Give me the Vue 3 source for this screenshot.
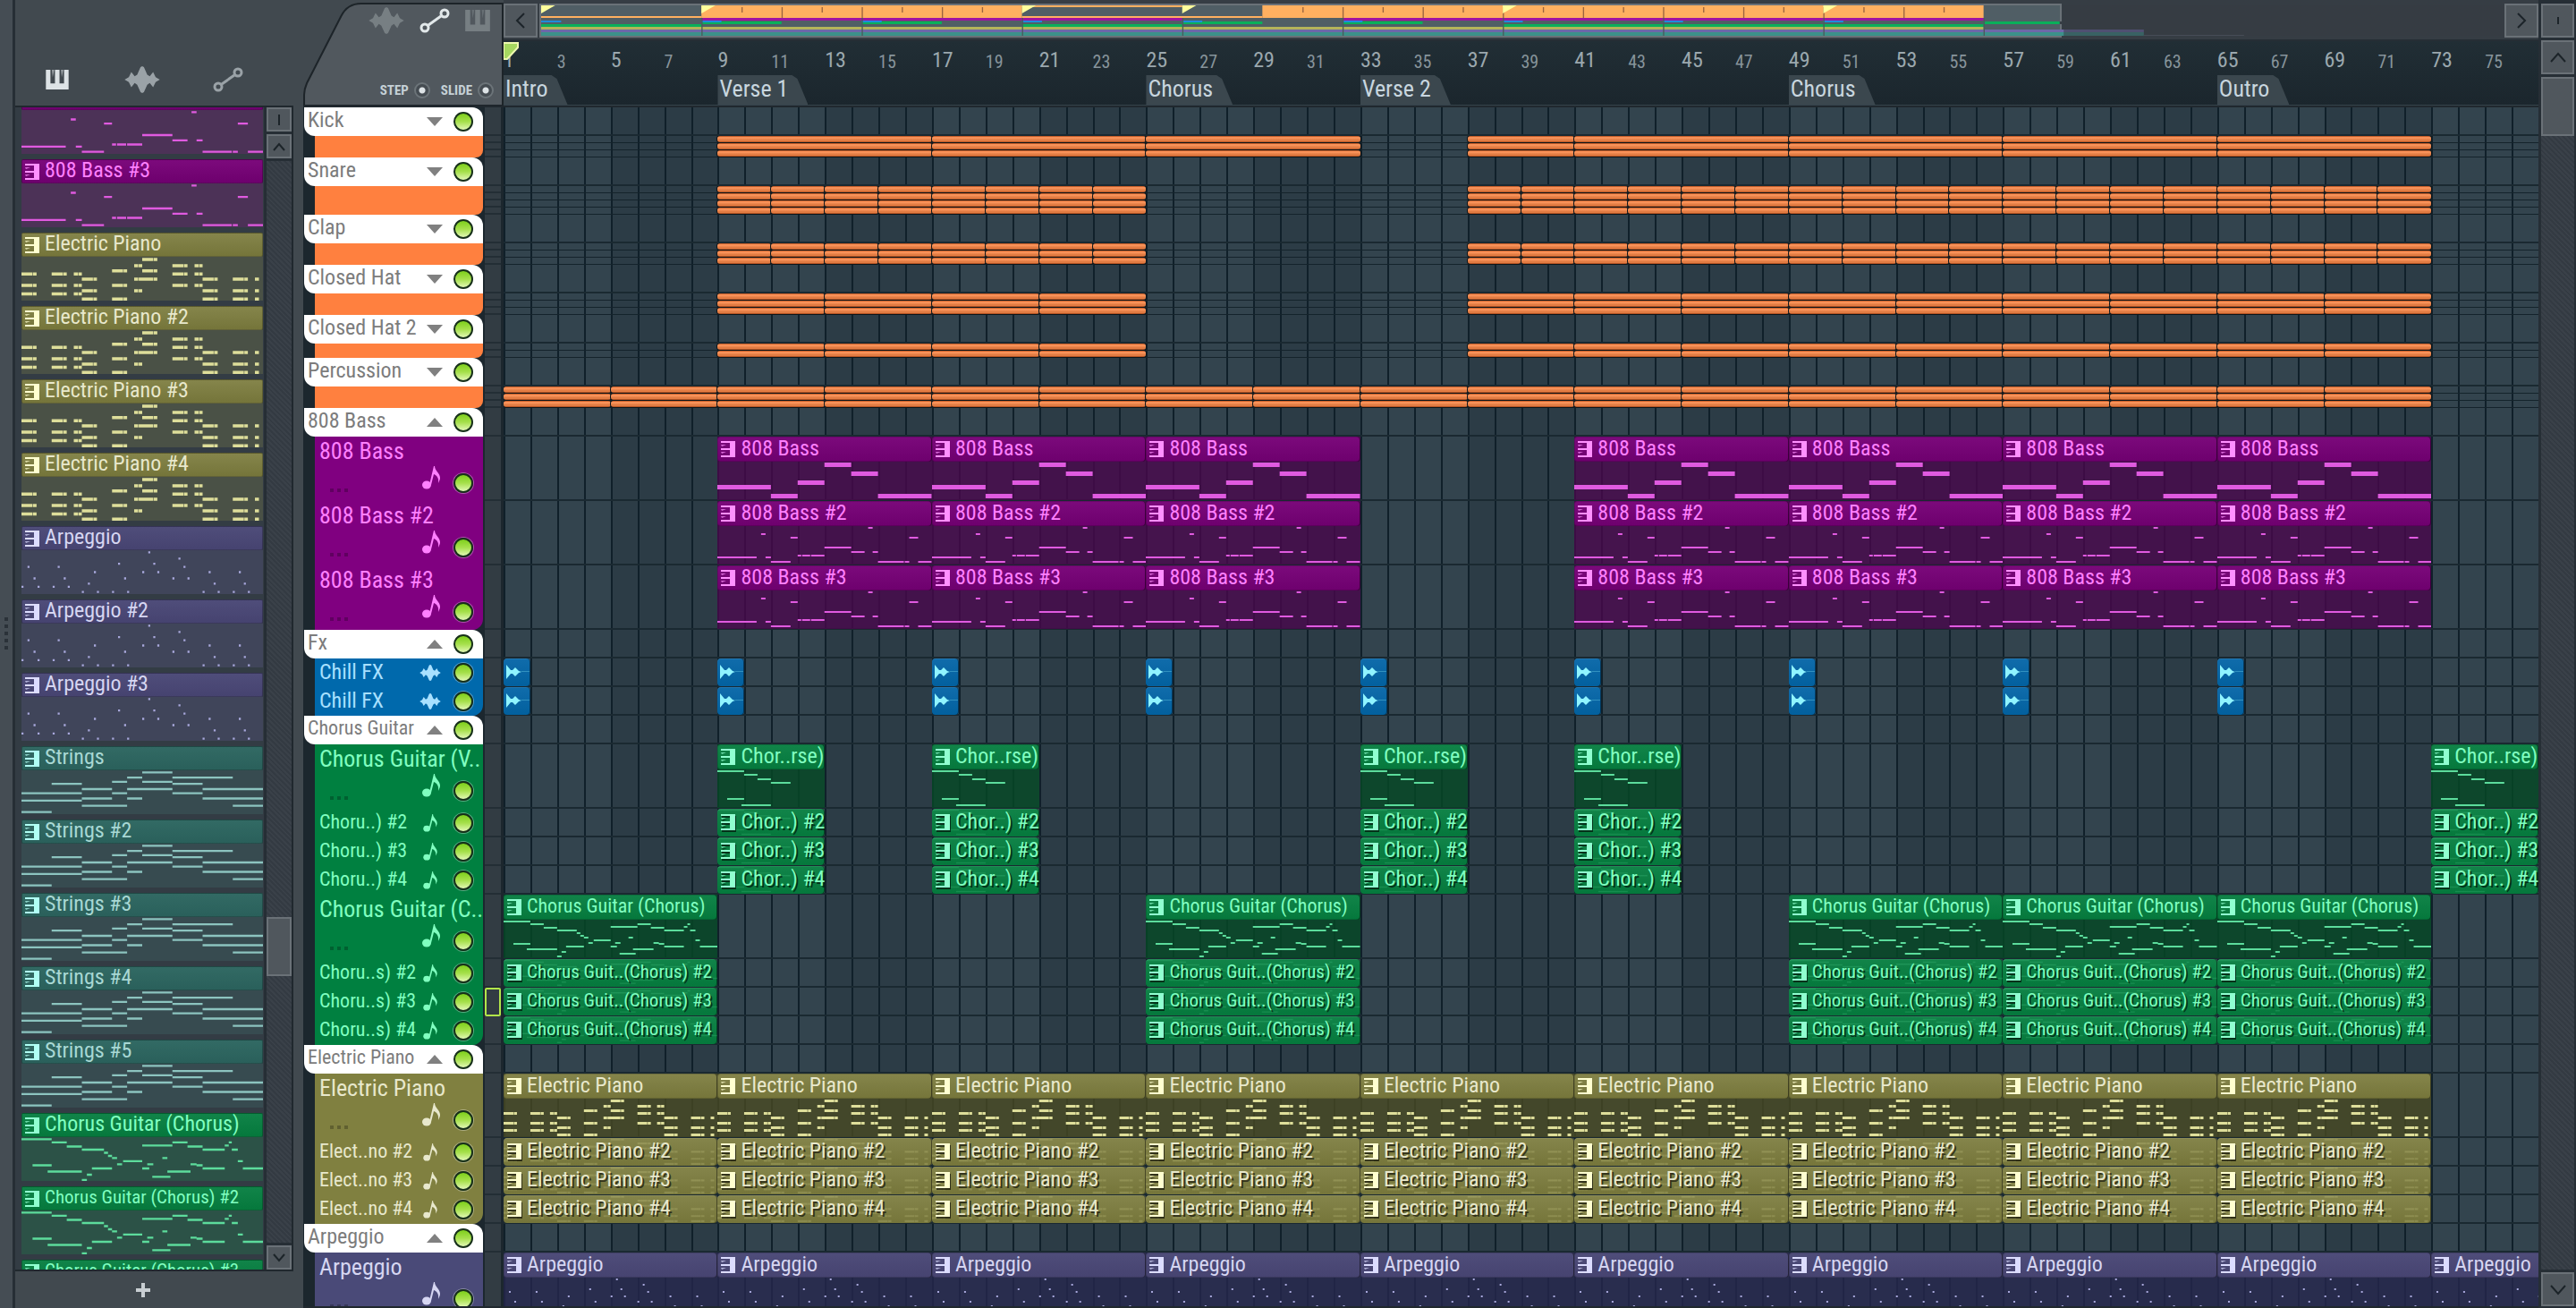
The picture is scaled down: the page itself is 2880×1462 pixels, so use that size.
<script setup>
import { ref, onMounted } from 'vue';

const BARS = 76;
const MAP_BARS = 98;

const step = ref(true);
const slide = ref(true);
const pickerList = ref(null);

// notes are [x, y, width] on a 240x42 canvas (8 bars)
const spread = (y, items) => items.map(([x, w]) => [x, y, w]);

const pianoNotes = [
  ...spread(1, [[120, 15]]),
  ...spread(7, [[112, 8], [150, 15], [172, 8]]),
  ...spread(12, [[90, 15], [120, 15]]),
  ...spread(15, [[0, 15], [30, 15], [52, 8], [150, 15], [172, 8]]),
  ...spread(20, [[60, 15], [112, 8], [120, 15], [180, 15], [210, 15], [232, 4]]),
  ...spread(26, [[0, 15], [30, 15], [52, 8], [90, 15], [150, 15], [172, 8]]),
  ...spread(31, [[60, 15], [112, 8], [180, 15], [210, 15], [232, 4]]),
  ...spread(34, [[0, 15], [30, 15], [52, 8]]),
  ...spread(39, [[60, 15], [90, 15], [180, 15], [210, 15], [232, 4]]),
].flatMap(([x, y, w]) => (w > 4 ? [[x, y, w - 4], [x + w - 3.5, y, 3.5]] : [[x, y, w]]));

const arpNotes = [
  ...spread(1, [[126, 2]]),
  ...spread(7, [[156, 2]]),
  ...spread(12, [[96, 2], [131, 2]]),
  ...spread(15, [[6, 2], [36, 2], [161, 2]]),
  ...spread(20, [[72, 2], [120, 2], [135, 2], [186, 2], [216, 2]]),
  ...spread(26, [[12, 2], [42, 2], [102, 2], [150, 2], [165, 2]]),
  ...spread(31, [[66, 2], [191, 2], [221, 2]]),
  ...spread(34, [[0, 2], [16, 2], [31, 2], [46, 2]]),
  ...spread(39, [[60, 2], [75, 2], [90, 2], [105, 2], [180, 2], [195, 2], [210, 2], [225, 2]]),
];

const stringNotes = [
  ...spread(1, [[120, 30]]),
  ...spread(6, [[105, 15], [150, 30], [180, 30]]),
  ...spread(10, [[90, 15], [120, 30]]),
  ...spread(12, [[30, 30], [150, 30]]),
  ...spread(17, [[60, 30], [105, 15], [120, 30], [180, 30], [210, 30]]),
  ...spread(21, [[0, 30], [30, 30], [90, 15], [150, 30]]),
  ...spread(26, [[60, 30], [105, 15], [180, 30], [210, 30]]),
  ...spread(28, [[0, 30], [30, 30]]),
  ...spread(33, [[60, 30], [90, 15], [210, 30]]),
  ...spread(39, [[0, 30]]),
];

const chorusNotes = [
  [0, 1, 30], [30, 4, 15], [45, 8, 15], [60, 11, 22], [82, 14, 4], [86, 17, 4], [90, 19, 5],
  [11, 26, 19], [26, 32, 34], [60, 40, 5], [65, 35, 5], [70, 29, 20], [95, 25, 5], [101, 22, 19],
  [120, 7, 30], [120, 29, 7], [125, 25, 6], [140, 19, 5], [130, 37, 18], [145, 32, 23],
  [150, 4, 15], [165, 8, 15], [168, 25, 6], [174, 26, 6], [180, 11, 22], [180, 29, 22],
  [202, 7, 4], [206, 4, 3], [209, 11, 6], [215, 22, 5], [220, 29, 20],
];

const toPath = (notes, h) => notes.map(([x, y, w]) => `M${x} ${y}h${w}v${h}h-${w}z`).join('');

const patterns = {
  bass: { w: 240, d: toPath([[0, 26, 60], [60, 36, 30], [90, 21, 30], [120, 1, 30], [150, 11, 30], [180, 36, 60]], 5) },
  bass2: {
    w: 240,
    d: toPath([
      [0, 34, 44], [49, 8, 5], [54, 34, 6], [60, 39, 22], [82, 12, 8], [90, 32, 4], [95, 32, 9], [105, 32, 15],
      [120, 23, 30], [150, 28, 15], [169, 1, 5], [174, 28, 6], [180, 39, 29], [210, 39, 5], [215, 12, 10], [225, 39, 15],
    ], 2),
  },
  piano: { w: 240, d: toPath(pianoNotes, 3) },
  arp: { w: 240, d: toPath(arpNotes, 2) },
  strings: { w: 240, d: toPath(stringNotes, 2) },
  chorus: { w: 240, d: toPath(chorusNotes, 2) },
  verse: { w: 120, d: toPath([[0, 1, 30], [30, 5, 15], [45, 10, 15], [60, 14, 22], [11, 32, 19], [27, 39, 33]], 2) },
};

const picker = [
  { name: '808 Bass #2', tone: 'purple', pattern: 'bass2' },
  { name: '808 Bass #3', tone: 'purple', pattern: 'bass2' },
  { name: 'Electric Piano', tone: 'olive', pattern: 'piano' },
  { name: 'Electric Piano #2', tone: 'olive', pattern: 'piano' },
  { name: 'Electric Piano #3', tone: 'olive', pattern: 'piano' },
  { name: 'Electric Piano #4', tone: 'olive', pattern: 'piano' },
  { name: 'Arpeggio', tone: 'indigo', pattern: 'arp' },
  { name: 'Arpeggio #2', tone: 'indigo', pattern: 'arp' },
  { name: 'Arpeggio #3', tone: 'indigo', pattern: 'arp' },
  { name: 'Strings', tone: 'teal', pattern: 'strings' },
  { name: 'Strings #2', tone: 'teal', pattern: 'strings' },
  { name: 'Strings #3', tone: 'teal', pattern: 'strings' },
  { name: 'Strings #4', tone: 'teal', pattern: 'strings' },
  { name: 'Strings #5', tone: 'teal', pattern: 'strings' },
  { name: 'Chorus Guitar (Chorus)', tone: 'green', pattern: 'chorus' },
  { name: 'Chorus Guitar (Chorus) #2', tone: 'green', pattern: 'chorus' },
  { name: 'Chorus Guitar (Chorus) #3', tone: 'green', pattern: 'chorus' },
];

const range = (from, to, size) => {
  const out = [];
  for (let bar = from; bar < to; bar += size) out.push([bar, size]);
  return out;
};
const at = (bars, size) => bars.map((bar) => [bar, size]);

const kickClips = [...range(9, 33, 8), [37, 4], ...range(41, 73, 8)];
const snareClips = [...range(9, 25, 2), ...range(37, 73, 2)];
const hatClips = [...range(9, 25, 4), ...range(37, 73, 4)];
const bassClips = [...range(9, 33, 8), ...range(41, 73, 8)];
const verseClips = at([9, 17, 33, 41, 73], 4);
const chorusClips = at([1, 25, 49, 57, 65], 8);
const allClips = range(1, 73, 8);

const drum = (name, rows, clips) => ({
  name,
  tone: 'orange',
  folded: true,
  tracks: Array.from({ length: rows }, () => ({ size: 'mini', clips })),
});

const groups = [
  drum('Kick', 3, kickClips),
  drum('Snare', 4, snareClips),
  drum('Clap', 3, snareClips),
  drum('Closed Hat', 3, hatClips),
  drum('Closed Hat 2', 2, hatClips),
  drum('Percussion', 3, range(1, 73, 4)),
  {
    name: '808 Bass',
    tone: 'purple',
    tracks: [
      { size: 'large', name: '808 Bass', clip: '808 Bass', pattern: 'bass', clips: bassClips },
      { size: 'large', name: '808 Bass #2', clip: '808 Bass #2', pattern: 'bass2', clips: bassClips },
      { size: 'large', name: '808 Bass #3', clip: '808 Bass #3', pattern: 'bass2', clips: bassClips },
    ],
  },
  {
    name: 'Fx',
    tone: 'blue',
    tracks: [
      { size: 'small', name: 'Chill FX', audio: true, clips: at([1, 9, 17, 25, 33, 41, 49, 57, 65], 1) },
      { size: 'small', name: 'Chill FX', audio: true, clips: at([1, 9, 17, 25, 33, 41, 49, 57, 65], 1) },
    ],
  },
  {
    name: 'Chorus Guitar',
    tone: 'green',
    tracks: [
      { size: 'large', name: 'Chorus Guitar (V..', clip: 'Chor..rse)', pattern: 'verse', clips: verseClips },
      { size: 'small', name: 'Choru..) #2', clip: 'Chor..) #2', pattern: 'verse', clips: verseClips },
      { size: 'small', name: 'Choru..) #3', clip: 'Chor..) #3', pattern: 'verse', clips: verseClips },
      { size: 'small', name: 'Choru..) #4', clip: 'Chor..) #4', pattern: 'verse', clips: verseClips },
      { size: 'large', name: 'Chorus Guitar (C..', clip: 'Chorus Guitar (Chorus)', pattern: 'chorus', clips: chorusClips },
      { size: 'small', name: 'Choru..s) #2', clip: 'Chorus Guit..(Chorus) #2', pattern: 'chorus', clips: chorusClips },
      { size: 'small', name: 'Choru..s) #3', clip: 'Chorus Guit..(Chorus) #3', pattern: 'chorus', clips: chorusClips, selected: true },
      { size: 'small', name: 'Choru..s) #4', clip: 'Chorus Guit..(Chorus) #4', pattern: 'chorus', clips: chorusClips },
    ],
  },
  {
    name: 'Electric Piano',
    tone: 'olive',
    tracks: [
      { size: 'large', name: 'Electric Piano', clip: 'Electric Piano', pattern: 'piano', clips: allClips },
      { size: 'small', name: 'Elect..no #2', clip: 'Electric Piano #2', pattern: 'piano', clips: allClips },
      { size: 'small', name: 'Elect..no #3', clip: 'Electric Piano #3', pattern: 'piano', clips: allClips },
      { size: 'small', name: 'Elect..no #4', clip: 'Electric Piano #4', pattern: 'piano', clips: allClips },
    ],
  },
  {
    name: 'Arpeggio',
    tone: 'indigo',
    tracks: [
      { size: 'large', name: 'Arpeggio', clip: 'Arpeggio', pattern: 'arp', clips: range(1, 81, 8) },
    ],
  },
];

const numbers = range(1, 77, 2).map(([bar]) => bar);

const markers = [
  { bar: 1, name: 'Intro' },
  { bar: 9, name: 'Verse 1' },
  { bar: 25, name: 'Chorus' },
  { bar: 33, name: 'Verse 2' },
  { bar: 49, name: 'Chorus' },
  { bar: 65, name: 'Outro' },
];

// overview blocks: [bar, bars, y, height, colour]
const overview = [
  [1, 8, 12, 2, '#ffb060'],
  [9, 16, 0, 14, '#ffb060'],
  [25, 8, 0, 2, '#ffb060'],
  [25, 12, 12, 2, '#ffb060'],
  [37, 36, 0, 14, '#ffb060'],
  [9, 24, 14, 3, '#a014a0'],
  [41, 32, 14, 3, '#a014a0'],
  ...[9, 17, 33, 41, 73].map((bar) => [bar, 4, 18, 3, '#0aaf5a']),
  [73, 9, 18, 3, '#0aaf5a'],
  ...[1, 25, 49, 57, 65].map((bar) => [bar, 8, 21, 3, '#0aaf5a']),
  ...[1, 9, 17, 25, 33, 41, 49, 57, 65].map((bar) => [bar, 1, 17, 2, '#1e8cdc']),
  [1, 72, 24, 3, '#b4b45a'],
  [1, 80, 27, 3, '#6e68a8'],
  [1, 80, 30, 4, '#3c918a'],
  [81, 5, 33, 1, '#5b6370'],
  [76.8, 21.2, 18, 3, '#363d44'],
].filter(([bar, bars]) => !(bar === 73 && bars === 9));
const ticks = [11, 13, 15, 17, 19, 21, 23, 39, 41, 43, 45, 47, 49, 51, 53, 55, 57, 59, 61, 63, 65, 67, 69, 71];

const place = (bar, size) => ({
  left: `${((bar - 1) / BARS) * 100}%`,
  width: size ? `${(size / BARS) * 100}%` : undefined,
});

onMounted(() => {
  pickerList.value.scrollTop = 24;
});
</script>

<template>
  <div class="daw">
    <svg class="defs" aria-hidden="true">
      <symbol id="keys" viewBox="0 0 30 26">
        <path d="M0 0h6v18h6V0h6v18h6V0h6v26H0z" />
        <path d="M8 0h3l-2 10zM20 0h3l-2 10z" opacity="0.6" />
      </symbol>
      <symbol id="wave" viewBox="0 0 42 32">
        <path d="M0 16l5-3l3-6l4 5l3-2l4-9l2-1l2 1l4 9l3 2l4-5l3 6l5 3l-5 3l-3 6l-4-5l-3 2l-4 9l-2 1l-2-1l-4-9l-3-2l-4 5l-3-6z" />
      </symbol>
      <symbol id="slope" viewBox="0 0 34 28">
        <g fill="none" stroke="currentColor" stroke-width="3">
          <circle cx="6" cy="22" r="4" />
          <circle cx="28" cy="6" r="4" />
          <path d="M10 19l14-10" />
        </g>
      </symbol>
      <symbol id="clip-keys" viewBox="0 0 16 18">
        <path d="M0 0h16v18H0v-2h10v-6H0V8h10V2H0z" />
        <path d="M0 4l6 0l-5 2zM0 12l6 0l-5 2z" opacity="0.7" />
      </symbol>
      <symbol id="clip-wave" viewBox="0 0 26 16">
        <path d="M0 0l5 6h2l3-3l4 4l3 1l-3 1l-4 4l-3-3h-2l-5 6z" />
        <path d="M17 7h9v1h-9z" opacity="0.3" />
      </symbol>
      <symbol id="note" viewBox="0 0 20 26">
        <ellipse cx="5" cy="21" rx="5" ry="4.5" />
        <path d="M8 21L13 0h1c0 5 6 8 6 13c0 2-1 4-2 6c1-6-2-9-5-10l-3 12z" />
      </symbol>
    </svg>

    <div class="grip"><i v-for="n in 5" :key="n"></i></div>

    <aside class="picker">
      <nav class="picker-tabs">
        <button class="on" aria-label="Patterns"><svg width="30" height="22" preserveAspectRatio="none"><use href="#keys" /></svg></button>
        <button aria-label="Audio"><svg width="42" height="30"><use href="#wave" /></svg></button>
        <button aria-label="Automation"><svg width="34" height="28"><use href="#slope" /></svg></button>
      </nav>
      <div class="picker-body">
        <div ref="pickerList" class="picker-list">
          <div v-for="item in picker" :key="item.name" class="pattern" :class="item.tone">
            <div class="pattern-head">
              <svg width="16" height="18"><use href="#clip-keys" /></svg>
              <span :class="{ tight: item.name.length > 22 }">{{ item.name }}</span>
            </div>
            <svg class="pattern-notes" :viewBox="`0 0 ${patterns[item.pattern].w} 42`" preserveAspectRatio="none">
              <path :d="patterns[item.pattern].d" />
            </svg>
          </div>
        </div>
        <div class="scroll">
          <button class="key" aria-label="Zoom"><svg width="14" height="14"><path d="M7 1v12" stroke-width="4" /></svg></button>
          <button class="key" aria-label="Scroll up"><svg width="14" height="14"><path d="M1 11l6-7l6 7" /></svg></button>
          <div class="track"><div class="thumb"></div></div>
          <button class="key" aria-label="Scroll down"><svg width="14" height="14"><path d="M1 3l6 7l6-7" /></svg></button>
        </div>
      </div>
      <button class="add" aria-label="Add pattern"><svg width="16" height="16"><path d="M6 0h4v6h6v4h-6v6h-4v-6h-6v-4h6z" /></svg></button>
    </aside>

    <main class="playlist">
      <div class="top">
        <div class="corner">
          <svg class="corner-bg" viewBox="0 0 222 118" preserveAspectRatio="none">
            <path d="M1 118V106Q1 100 4 93L42 18Q49 4 64 4H221V118z" />
          </svg>
          <div class="corner-tabs">
            <button aria-label="Audio"><svg width="42" height="30"><use href="#wave" /></svg></button>
            <button class="on" aria-label="Automation"><svg width="34" height="28"><use href="#slope" /></svg></button>
            <button aria-label="Patterns"><svg width="30" height="24"><use href="#keys" /></svg></button>
          </div>
          <div class="corner-modes">
            <label>STEP <input v-model="step" type="checkbox" /></label>
            <label>SLIDE <input v-model="slide" type="checkbox" /></label>
          </div>
        </div>
        <div class="timeline">
          <div class="map-row">
            <button class="key wide" aria-label="Scroll left"><svg width="14" height="18"><path d="M11 1l-8 8l8 8" /></svg></button>
            <div class="map">
              <div class="map-view" :style="{ width: (BARS / MAP_BARS) * 100 + '%' }"></div>
              <svg class="map-svg" :viewBox="`0 0 ${MAP_BARS} 34`" preserveAspectRatio="none">
                <rect v-for="(b, i) in overview" :key="i" :x="b[0] - 1" :y="b[2]" :width="b[1]" :height="b[3]" :fill="b[4]" />
                <rect v-for="t in ticks" :key="t" :x="t - 1" y="2" width="0.06" :height="t % 4 === 1 ? 12 : 6" fill="#9a6440" />
                <rect v-for="t in [9, 17, 25, 33, 41, 49, 57, 65, 73]" :key="t" :x="t - 1" y="14" width="0.06" height="20" fill="#4b5a5c" />
                <rect :x="BARS" y="0" :width="MAP_BARS - BARS" height="34" fill="#363d44" opacity="0.55" />
                <path v-for="m in markers" :key="m.bar" :d="`M${m.bar - 1} 0h0.7l-0.7 9z`" fill="#ffff9c" />
              </svg>
            </div>
            <button class="key wide" aria-label="Scroll right"><svg width="14" height="18"><path d="M3 1l8 8l-8 8" /></svg></button>
          </div>
          <div class="ruler">
            <span v-for="n in numbers" :key="n" class="num" :class="{ major: n % 4 === 1 }" :style="place(n)">{{ n }}</span>
            <span v-for="m in markers" :key="m.bar" class="marker" :style="place(m.bar)">{{ m.name }}</span>
            <svg class="playhead" width="18" height="20"><path d="M0 1h16v5l-12 13h-4z" /></svg>
          </div>
        </div>
      </div>

      <div class="tracks">
        <section v-for="g in groups" :key="g.name" class="group" :class="g.tone">
          <div class="row small">
            <div class="group-head">
              <span class="group-name" :class="{ snug: g.name.length > 12 }">{{ g.name }}</span>
              <button class="fold" :aria-label="'Fold ' + g.name">
                <svg width="18" height="10"><path :d="g.folded ? 'M0 0h18l-9 10z' : 'M0 10h18l-9-10z'" /></svg>
              </button>
              <button class="led" :aria-label="'Mute group ' + g.name"></button>
            </div>
            <div class="cell"></div>
            <div class="lane"></div>
          </div>
          <div v-for="(t, i) in g.tracks" :key="i" class="row" :class="t.size">
            <div class="strip">
              <template v-if="t.name">
                <span class="strip-name" :class="{ snug: t.size === 'small' && !t.audio }">{{ t.name }}</span>
                <div class="strip-tools">
                  <span v-if="t.size === 'large'" class="dots"><i></i><i></i><i></i></span>
                  <svg v-if="t.audio" class="kind" width="24" height="18"><use href="#wave" /></svg>
                  <svg v-else class="kind"><use href="#note" /></svg>
                  <button class="led" :aria-label="'Mute ' + t.name"></button>
                </div>
              </template>
            </div>
            <div class="cell" :class="{ selected: t.selected }"></div>
            <div class="lane">
              <div v-for="c in t.clips" :key="c[0]" class="clip" :style="place(c[0], c[1])">
                <div v-if="t.clip" class="clip-head">
                  <svg width="16" height="18"><use href="#clip-keys" /></svg>
                  <span :class="{ tight: t.clip.length > 22, snug: t.clip.length === 22 }">{{ t.clip }}</span>
                </div>
                <svg v-if="t.audio" class="clip-audio" width="26" height="16"><use href="#clip-wave" /></svg>
                <svg v-if="t.pattern" class="clip-notes" :viewBox="`0 0 ${patterns[t.pattern].w} 42`" preserveAspectRatio="none">
                  <path :d="patterns[t.pattern].d" />
                </svg>
              </div>
            </div>
          </div>
        </section>
      </div>
    </main>

    <div class="scroll main-scroll">
      <button class="key" aria-label="Zoom"><svg width="14" height="14"><path d="M7 3v8" stroke-width="4" /></svg></button>
      <button class="key" aria-label="Scroll up"><svg width="18" height="14"><path d="M1 12l8-9l8 9" /></svg></button>
      <div class="track"><div class="thumb"></div></div>
      <button class="key" aria-label="Scroll down"><svg width="18" height="14"><path d="M1 3l8 9l8-9" /></svg></button>
    </div>
  </div>
</template>

<style>
body {
  background: #424a51;
}
</style>

<style scoped>
.daw {
  display: flex;
  height: 100vh;
  overflow: hidden;
  background: #41494f;
  font-family: 'Roboto Condensed', 'Liberation Sans Narrow', 'Open Sans', sans-serif;
  font-size: 24px;
  color: #c5d0d6;
}

.defs {
  position: absolute;
  width: 0;
  height: 0;
}

svg {
  display: block;
  fill: currentColor;
  flex: none;
}

button {
  display: flex;
  align-items: center;
  justify-content: center;
  padding: 0;
  border: none;
  background: none;
  color: inherit;
  cursor: pointer;
}

.snug {
  font-size: 22px;
}

.tight {
  font-size: 21px;
}

/* tones */
.purple {
  --strip: #800080;
  --head: linear-gradient(#7c0a7c, #6e006e);
  --body: rgba(74, 7, 77, 0.78);
  --pane: #4c3257;
  --text: #ff80ff;
  --icon: #ff90ff;
  --note: #e05ae0;
}

.olive {
  --strip: #808040;
  --head: linear-gradient(#85854b, #75753a);
  --body: rgba(74, 74, 34, 0.78);
  --pane: #4a5146;
  --text: #e8e8cc;
  --icon: #ffffd0;
  --note: #dede9a;
}

.indigo {
  --strip: #4a4a78;
  --head: linear-gradient(#4f4d7a, #464370);
  --body: rgba(38, 38, 78, 0.78);
  --pane: #40455a;
  --text: #d6d6f2;
  --icon: #dcdcff;
  --note: #a8a8dc;
}

.green {
  --strip: #008040;
  --head: linear-gradient(#118449, #05783c);
  --body: rgba(6, 72, 38, 0.84);
  --pane: #2c5247;
  --text: #80ffc0;
  --icon: #90ffd0;
  --note: #5cdc9c;
}

.teal {
  --head: linear-gradient(#326a64, #2a605b);
  --pane: #374b50;
  --text: #a8d8d4;
  --icon: #b0fff4;
  --note: #8cc4bf;
}

.blue {
  --strip: #0069ac;
  --body: linear-gradient(#106cab, #02609e);
  --text: #a8e0ff;
  --icon: #90f4ff;
}

.orange {
  --strip: #ff803f;
  --body: linear-gradient(#c85f2a 0 1px, #f79158 1px 3px, #e27c43 4px 6px, #b85524 6px);
}

/* left grip */
.grip {
  flex: none;
  width: 14px;
  padding-bottom: 46px;
  box-sizing: content-box;
  border-right: 3px solid #262e35;
  background: #454d54;
  display: flex;
  flex-direction: column;
  align-items: center;
  justify-content: center;
  gap: 4px;
}

.grip i {
  width: 4px;
  height: 4px;
  background: #2b3239;
}

/* pattern picker */
.picker {
  flex: none;
  width: 311px;
  margin-right: 11px;
  display: flex;
  flex-direction: column;
}

.picker-tabs {
  height: 118px;
  box-sizing: border-box;
  padding: 60px 56px 0 32px;
  display: flex;
  align-items: center;
  justify-content: space-between;
  color: #9aa2a7;
}

.picker-tabs .on {
  color: #dde3e6;
}

.picker-body {
  flex: 1;
  min-height: 0;
  display: flex;
  border: 2px solid #20282e;
  border-left: none;
  background: #333c44;
}

.picker-list {
  flex: 1;
  min-width: 0;
  padding: 0 1px 0 7px;
  overflow: hidden;
}

.pattern {
  margin-bottom: 6px;
}

.pattern-head {
  height: 27px;
  box-sizing: border-box;
  padding-left: 3px;
  display: flex;
  align-items: center;
  gap: 6px;
  border: 1px solid rgba(0, 0, 0, 0.25);
  border-radius: 2px;
  background: var(--head);
  color: var(--icon);
  white-space: nowrap;
}

.pattern-head span {
  color: var(--text);
  line-height: 24px;
  padding-bottom: 3px;
}

.pattern-notes {
  width: 100%;
  height: 49px;
  background: var(--pane);
  fill: var(--note);
}

.add {
  height: 41px;
  padding-right: 26px;
  color: #c8ced2;
}

/* scrollbars */
.scroll {
  flex: none;
  width: 28px;
  display: flex;
  flex-direction: column;
  gap: 3px;
  border-left: 3px solid #262e35;
  background: #262e35;
}

.key {
  flex: none;
  height: 27px;
  border: 2px solid #6a7177;
  background: #50575d;
}

.key path {
  fill: none;
  stroke: #1c2429;
  stroke-width: 2;
}

.key.wide {
  width: 38px;
  height: 38px;
}

.track {
  flex: 1;
  display: flex;
  flex-direction: column;
  background: repeating-linear-gradient(45deg, #333a42 0 2px, #3a4149 2px 4px);
}

.thumb {
  height: 66px;
  box-sizing: border-box;
  border: 2px solid #6a7177;
  background: #50575d;
}

.picker .track {
  justify-content: flex-end;
  padding-bottom: 298px;
}

.main-scroll {
  width: 37px;
  padding: 4px 2px 2px 0;
}

.main-scroll .key {
  height: 38px;
}

/* playlist top */
.playlist {
  flex: 1;
  min-width: 0;
  display: flex;
  flex-direction: column;
  border-bottom: 2px solid #20282e;
}

.top {
  flex: none;
  display: flex;
  height: 118px;
  border-bottom: 2px solid #20282e;
}

.corner {
  flex: none;
  position: relative;
  width: 224px;
  display: flex;
  flex-direction: column;
  justify-content: space-between;
}

.corner-bg {
  position: absolute;
  inset: 0;
  width: 100%;
  height: 100%;
  fill: #51585e;
  stroke: #1d2429;
  stroke-width: 2;
}

.corner-tabs {
  position: relative;
  display: flex;
  align-items: center;
  justify-content: flex-end;
  gap: 16px;
  padding: 8px 14px 0 0;
  color: #777f83;
}

.corner-tabs .on {
  color: #e2e8ea;
}

.corner-modes {
  position: relative;
  display: flex;
  justify-content: flex-end;
  gap: 12px;
  padding: 0 11px 8px 0;
  font-size: 15px;
  font-weight: 700;
  line-height: 18px;
}

.corner-modes label {
  display: flex;
  align-items: center;
  gap: 6px;
}

.corner-modes input {
  appearance: none;
  width: 18px;
  height: 18px;
  margin: 0;
  border: 2px solid #6c7479;
  border-radius: 50%;
  background: radial-gradient(circle, #dde3e6 0 3px, #454c52 4px);
}

.timeline {
  flex: 1;
  min-width: 0;
  display: flex;
  flex-direction: column;
}

.map-row {
  display: flex;
  gap: 2px;
  padding: 4px 0 2px;
  background: #363d44;
  border-bottom: 2px solid #262e35;
}

.map {
  flex: 1;
  position: relative;
}

.map-view {
  height: 38px;
  box-sizing: border-box;
  border: 2px solid #6a7177;
  background: #505e65;
}

.map-svg {
  position: absolute;
  left: 2px;
  top: 2px;
  width: 100%;
  height: 34px;
}

.ruler {
  flex: 1;
  position: relative;
  background: linear-gradient(#212e35, #1b262d);
  border-bottom: 1px solid #35434b;
}

.num {
  position: absolute;
  top: 10px;
  font-size: 20px;
  line-height: 26px;
  color: #87949b;
}

.num.major {
  top: 8px;
  font-size: 24px;
  color: #9ba8ae;
}

.marker {
  position: absolute;
  bottom: 0;
  padding: 0 22px 2px 2px;
  font-size: 26px;
  line-height: 31px;
  color: #c8d6df;
  background: #3b474e;
  clip-path: polygon(0 0, calc(100% - 18px) 0, calc(100% - 12px) 4px, 100% 100%, 0 100%);
}

.playhead {
  position: absolute;
  left: 0;
  top: 1px;
  fill: #a6d860;
  stroke: #eef8b0;
  stroke-width: 2;
}

/* tracks */
.tracks {
  flex: 1;
  min-height: 0;
  overflow: hidden;
  background: #1c272e;
}

.row {
  display: flex;
  height: 32px;
}

.row.mini {
  height: 8px;
}

.row.large {
  height: 72px;
}

.group-head {
  flex: none;
  width: 200px;
  box-sizing: border-box;
  margin: 0 2px 0 1px;
  padding: 0 11px 0 4px;
  display: flex;
  align-items: center;
  background: #fff;
  border-radius: 0 12px 0 12px;
  color: #7c7c7c;
}

.group-name {
  flex: 1;
  min-width: 0;
  line-height: 28px;
  padding-bottom: 4px;
  white-space: nowrap;
}

.fold {
  margin-right: 12px;
  color: #808080;
}

.led {
  flex: none;
  box-sizing: border-box;
  width: 22px;
  height: 22px;
  border: 2px solid #17301a;
  border-radius: 50%;
  background: linear-gradient(#7ed01c, #a6e04c 50%, #e2f8b4);
}

.strip {
  flex: none;
  width: 188px;
  box-sizing: border-box;
  margin: 0 2px 0 13px;
  padding: 0 11px 0 5px;
  display: flex;
  align-items: center;
  background: var(--strip);
  color: var(--text);
}

.row:last-child .strip {
  border-bottom-right-radius: 12px;
}

.row.mini:last-child .strip {
  border-bottom-right-radius: 8px;
}

.strip-name {
  flex: 1;
  line-height: 28px;
  padding-bottom: 3px;
  white-space: nowrap;
}

.strip-tools {
  display: flex;
  align-items: center;
}

.strip .led {
  box-shadow: 0 0 0 1px rgba(255, 255, 255, 0.35);
}

.kind {
  width: 16px;
  height: 20px;
  margin-right: 18px;
}

.blue .kind {
  width: 24px;
  height: 18px;
  margin-right: 14px;
}

.large .strip {
  flex-direction: column;
  align-items: stretch;
}

.large .strip-name {
  flex: none;
  padding-bottom: 0;
  font-size: 26px;
  line-height: 32px;
}

.large .strip-tools {
  height: 42px;
}

.large .kind {
  width: 20px;
  height: 26px;
  margin: -12px 15px 0 0;
}

.dots {
  display: flex;
  gap: 4px;
  margin: 16px auto 0 12px;
}

.dots i {
  width: 4px;
  height: 4px;
  background: rgba(0, 0, 0, 0.25);
}

.cell {
  flex: none;
  width: 18px;
  box-sizing: border-box;
  margin-right: 3px;
  background: #323c43;
  border-bottom: 2px solid #232e35;
}

.cell.selected {
  border: 2px solid #b2e64a;
  border-radius: 2px;
}

.lane {
  flex: 1;
  min-width: 0;
  position: relative;
  overflow: hidden;
  box-shadow: inset 0 -2px #1a2931;
  background:
    repeating-linear-gradient(to right, #10202a 0 2px, transparent 2px calc(100% / 76)),
    repeating-linear-gradient(to right, #33444e 0 calc(400% / 76), #2c3c46 calc(400% / 76) calc(800% / 76));
}

.mini .lane {
  box-shadow: inset 0 -1px #14232b;
}

.clip {
  position: absolute;
  top: 0;
  bottom: 1px;
  overflow: hidden;
  color: var(--icon);
  background: var(--body);
}

.mini .clip {
  border-radius: 3px;
  box-shadow: 0 0 0 1px #0c151a;
}

.small .clip {
  border-radius: 4px;
  background: var(--head, var(--body));
  box-shadow: inset -1px 0 rgba(0, 0, 0, 0.45), inset 0 1px rgba(255, 255, 255, 0.08);
}

.blue .clip {
  background: var(--body);
}

.clip-head {
  position: relative;
  z-index: 1;
  height: 28px;
  padding-left: 4px;
  display: flex;
  align-items: center;
  gap: 6px;
  border-radius: 4px;
  white-space: nowrap;
  line-height: 24px;
}

.large .clip-head {
  background: var(--head);
  box-shadow: inset 0 0 0 1px rgba(0, 0, 0, 0.15), inset -1px 0 rgba(0, 0, 0, 0.4);
}

.clip-head span {
  padding-bottom: 3px;
  color: var(--text);
}

.small .clip-head {
  height: 30px;
  text-shadow: 2px 2px 0 rgba(0, 0, 0, 0.6);
}

.small .clip-head svg {
  filter: drop-shadow(1px 2px 0 rgba(0, 0, 0, 0.6));
}

.clip-notes {
  width: 100%;
  height: 42px;
  fill: var(--note);
}

.small .clip-notes {
  position: absolute;
  inset: 0;
  height: 30px;
  opacity: 0.2;
}

.clip-audio {
  margin: 7px 0 0 3px;
}
</style>
